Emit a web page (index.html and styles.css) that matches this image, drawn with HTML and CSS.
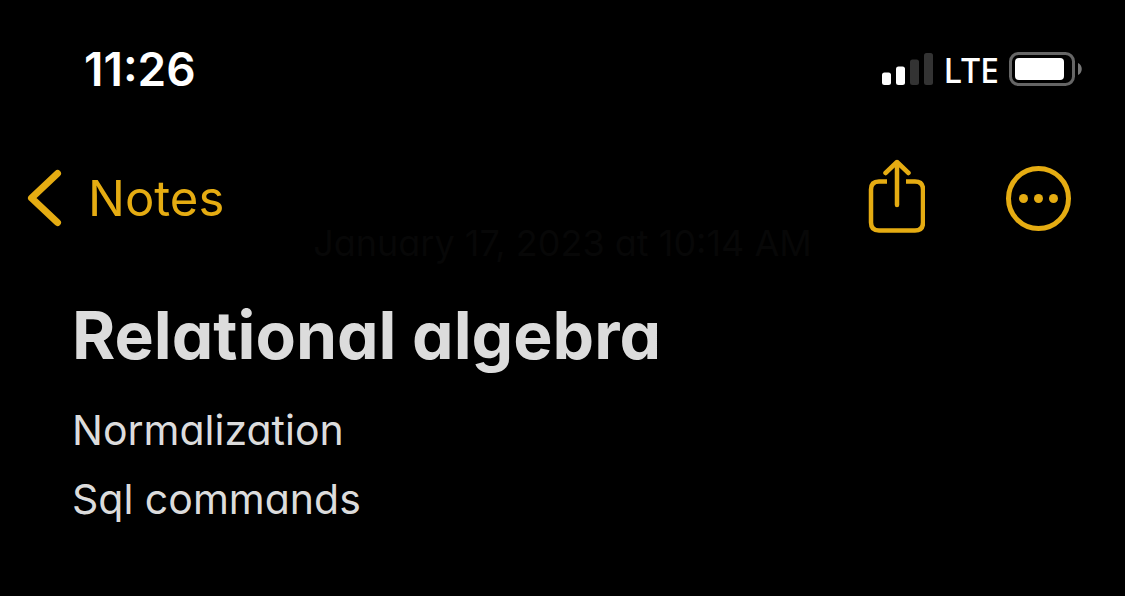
FILE: index.html
```html
<!DOCTYPE html>
<html lang="en">
<head>
<meta charset="utf-8">
<meta name="viewport" content="width=device-width, initial-scale=1">
<title>Relational algebra</title>
<link rel="stylesheet" href="styles.css">
</head>
<body>
<header class="status">
  <time class="clock">11:26</time>
  <div class="indicators">
    <svg class="signal" viewBox="0 0 52 34" aria-hidden="true">
      <rect x="1" y="20.5" width="9" height="12.5" rx="2.5" fill="#fff"/>
      <rect x="15" y="14.5" width="9" height="18.5" rx="2.5" fill="#fff"/>
      <rect x="29" y="7.5" width="9" height="25.5" rx="2.5" fill="#333"/>
      <rect x="43" y="1" width="9" height="32" rx="2.5" fill="#333"/>
    </svg>
    <span class="network">LTE</span>
    <svg class="battery" viewBox="0 0 74 36" aria-hidden="true">
      <rect x="1.5" y="2.5" width="63" height="31" rx="8" fill="none" stroke="#666" stroke-width="3"/>
      <rect x="6" y="7" width="49" height="22" rx="4" fill="#fff"/>
      <path d="M69 12c5 2 5 10 0 12z" fill="#777"/>
    </svg>
  </div>
</header>
<nav class="toolbar">
  <a class="back" href="#">
    <svg class="chevron" viewBox="0 0 36 60" aria-hidden="true"><path d="M31.500 5.500L5.500 30L31.500 54.500"/></svg>
    <span>Notes</span>
  </a>
  <div class="actions">
    <button class="action" type="button" aria-label="Share">
      <svg class="share" viewBox="0 0 58 78" aria-hidden="true"><path class="tray" d="M20 22.500H12Q4 22.500 4 30.500V63.500Q4 71.500 12 71.500H48Q56 71.500 56 63.500V30.500Q56 22.500 48 22.500H39"/><path d="M30 46V3M18.500 14L30 3L41.500 14"/></svg>
    </button>
    <button class="action" type="button" aria-label="More">
      <svg class="more" viewBox="0 0 66 66" aria-hidden="true"><circle class="ring" cx="33.500" cy="33.500" r="30"/><circle cx="18.500" cy="33.500" r="4.500"/><circle cx="33.500" cy="33.500" r="4.500"/><circle cx="48.500" cy="33.500" r="4.500"/></svg>
    </button>
  </div>
</nav>
<main class="note">
  <time class="date">January 17, 2023 at 10:14 AM</time>
  <h1 class="title">Relational algebra</h1>
  <p class="line">Normalization</p>
  <p class="line">Sql commands</p>
</main>
</body>
</html>
```
FILE: styles.css
```css
* { box-sizing: border-box; }
body {
  margin: 0;
  background: #000;
  color: #dcdcdc;
  font-family: Inter, "Liberation Sans", sans-serif;
}
.status {
  display: flex;
  justify-content: space-between;
  align-items: center;
  height: 138px;
  padding: 0 42px 0 84px;
  color: #fff;
}
.clock { font-size: 46px; font-weight: 600; }
.indicators { display: flex; align-items: center; gap: 10px; }
.signal { width: 52px; height: 34px; }
.network { font-family: "Noto Sans", "Open Sans", sans-serif; font-size: 34px; font-weight: 500; line-height: 36px; padding-top: 2px; }
.battery { width: 74px; height: 36px; }
.toolbar {
  display: flex;
  justify-content: space-between;
  align-items: center;
  height: 90px;
  padding: 30px 54px 0 26px;
}
.back {
  display: flex;
  align-items: center;
  gap: 26px;
  color: #e5ac12;
  font-size: 49px;
  text-decoration: none;
}
.chevron { width: 36px; height: 60px; fill: none; stroke: #e5ac12; stroke-width: 7; stroke-linecap: round; stroke-linejoin: round; }
.actions { display: flex; align-items: center; gap: 80px; }
.action { display: flex; padding: 0; border: 0; background: none; cursor: pointer; }
.share { width: 58px; height: 78px; fill: none; stroke: #e5ac12; stroke-width: 4.5; stroke-linecap: round; stroke-linejoin: round; }
.tray { stroke-linecap: butt; }
.more { width: 66px; height: 66px; fill: #e5ac12; }
.ring { fill: none; stroke: #e5ac12; stroke-width: 5; }
.note { padding: 0 72px; font-feature-settings: "cv11"; }
.date { display: block; color: #070707; font-size: 36px; line-height: 30px; text-align: center; }
.title { margin: 37px 0 21px; font-size: 66px; font-weight: 700; line-height: 80px; }
.line { margin: 0; font-size: 41px; line-height: 69px; }
```
